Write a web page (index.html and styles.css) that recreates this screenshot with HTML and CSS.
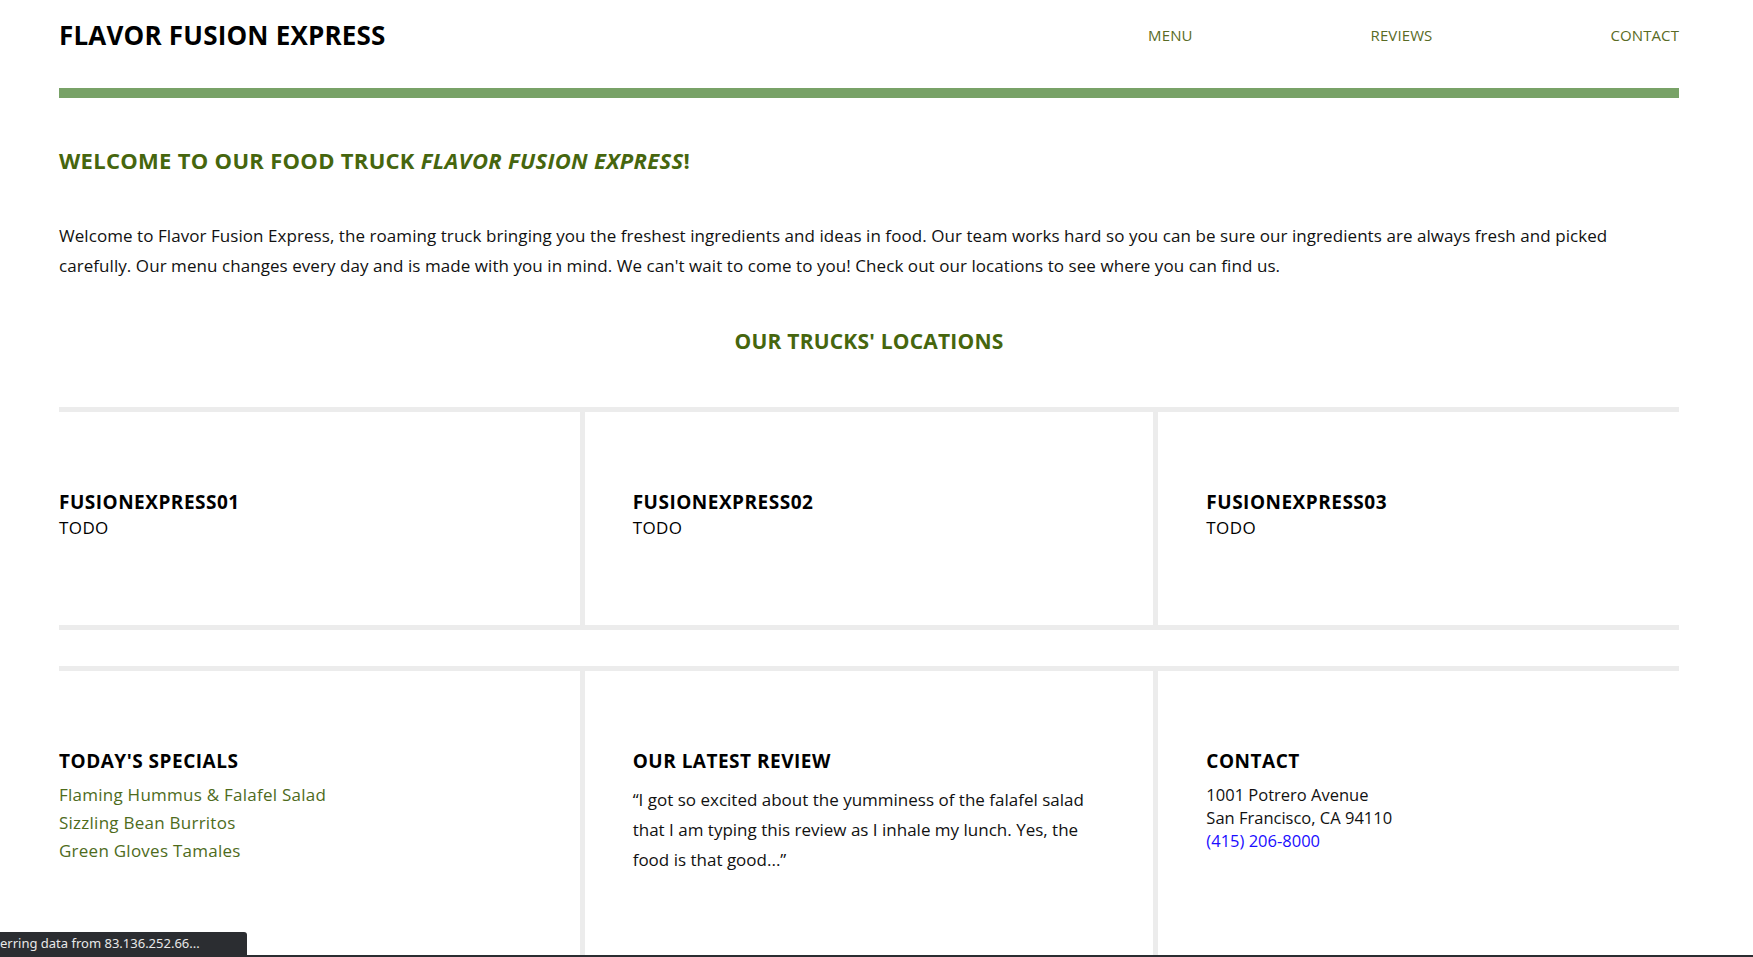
FILE: index.html
```html
<!DOCTYPE html>
<html lang="en">
<head>
<meta charset="utf-8">
<title>Flavor Fusion Express</title>
<link rel="stylesheet" href="styles.css">
</head>
<body>
<div class="page">
  <header class="topbar">
    <div class="logo">FLAVOR FUSION EXPRESS</div>
    <nav class="nav">
      <a href="#menu">MENU</a>
      <a href="#reviews">REVIEWS</a>
      <a href="#contact">CONTACT</a>
    </nav>
  </header>
  <div class="rule"></div>

  <h1 class="welcome">WELCOME TO OUR FOOD TRUCK <em>FLAVOR FUSION EXPRESS</em>!</h1>
  <p class="intro">Welcome to Flavor Fusion Express, the roaming truck bringing you the freshest ingredients and ideas in food. Our team works hard so you can be sure our ingredients are always fresh and picked carefully. Our menu changes every day and is made with you in mind. We can't wait to come to you! Check out our locations to see where you can find us.</p>

  <h2 class="section-title">OUR TRUCKS' LOCATIONS</h2>

  <section class="row row-locations">
    <div class="col col-first">
      <h3 class="col-title">FUSIONEXPRESS01</h3>
      <p class="todo">TODO</p>
    </div>
    <div class="col col-mid">
      <h3 class="col-title">FUSIONEXPRESS02</h3>
      <p class="todo">TODO</p>
    </div>
    <div class="col col-last">
      <h3 class="col-title">FUSIONEXPRESS03</h3>
      <p class="todo">TODO</p>
    </div>
  </section>

  <section class="row row-info">
    <div class="col col-first">
      <h3 class="col-title">TODAY'S SPECIALS</h3>
      <ul class="specials">
        <li>Flaming Hummus &amp; Falafel Salad</li>
        <li>Sizzling Bean Burritos</li>
        <li>Green Gloves Tamales</li>
      </ul>
    </div>
    <div class="col col-mid">
      <h3 class="col-title">OUR LATEST REVIEW</h3>
      <p class="review">“I got so excited about the yumminess of the falafel salad that I am typing this review as I inhale my lunch. Yes, the food is that good...”</p>
    </div>
    <div class="col col-last">
      <h3 class="col-title">CONTACT</h3>
      <address class="contact">
        <span>1001 Potrero Avenue</span>
        <span>San Francisco, CA 94110</span>
        <a href="tel:4152068000">(415) 206-8000</a>
      </address>
    </div>
  </section>
</div>

<div class="status">erring data from 83.136.252.66...</div>
<div class="frame-line"></div>
</body>
</html>
```

FILE: styles.css
```css
html, body {
  margin: 0;
  padding: 0;
  background: #ffffff;
}

body {
  font-family: "Open Sans", "Noto Sans", sans-serif;
  color: #111111;
}

.page {
  width: 1620px;
  margin-left: 59px;
}

.topbar {
  height: 70px;
  display: flex;
  align-items: center;
  justify-content: space-between;
}

.logo {
  font-size: 26px;
  font-weight: 700;
  color: #000000;
  letter-spacing: 0.2px;
}

.nav {
  display: flex;
  gap: 178px;
}

.nav a {
  font-size: 15px;
  color: #596b25;
  text-decoration: none;
  letter-spacing: 0.1px;
}

.rule {
  height: 10px;
  margin-top: 18px;
  background: #78a267;
}

.welcome {
  margin: 50px 0 0;
  font-size: 22px;
  line-height: 24px;
  font-weight: 700;
  color: #46660e;
  letter-spacing: 0.3px;
}

.welcome em {
  font-style: italic;
}

.intro {
  margin: 49px 0 0;
  font-size: 17px;
  line-height: 30px;
  color: #111111;
  letter-spacing: 0.06px;
}

.section-title {
  margin: 48px 0 0;
  text-align: center;
  font-size: 21px;
  line-height: 24px;
  font-weight: 700;
  color: #46660e;
  letter-spacing: 0.2px;
}

.row {
  display: flex;
  border-top: 5px solid #ececec;
}

.row-locations {
  margin-top: 54px;
  border-bottom: 5px solid #ececec;
}

.row-info {
  margin-top: 36px;
  min-height: 300px;
}

.col {
  flex: 1 1 0;
  padding: 78px 48px 83px;
}

.col-first {
  padding-left: 0;
}

.col-last {
  padding-right: 0;
}

.col-mid {
  border-left: 5px solid #ececec;
  border-right: 5px solid #ececec;
}

.col-title {
  margin: 0;
  font-size: 19px;
  line-height: 24px;
  font-weight: 700;
  color: #000000;
  letter-spacing: 0.5px;
}

.todo {
  margin: 0;
  font-size: 17px;
  line-height: 28px;
  color: #000000;
  letter-spacing: 0.4px;
}

.specials {
  list-style: none;
  margin: 8px 0 0;
  padding: 0;
}

.specials li {
  font-size: 17px;
  line-height: 28px;
  color: #4e6b1c;
  letter-spacing: 0.25px;
}

.review {
  margin: 12px 0 0;
  font-size: 17px;
  line-height: 30px;
  color: #111111;
}

.contact {
  margin-top: 10px;
  display: flex;
  flex-direction: column;
  font-style: normal;
  font-size: 16.5px;
  line-height: 23px;
  color: #111111;
}

.contact a {
  color: #1a0dff;
  text-decoration: none;
}

.status {
  position: fixed;
  left: 0;
  bottom: 2px;
  width: 247px;
  height: 23px;
  box-sizing: border-box;
  background: #2b2d31;
  border-top-right-radius: 3px;
  color: #e8e8e8;
  font-family: "Noto Sans", "DejaVu Sans", sans-serif;
  font-size: 13px;
  line-height: 23px;
  white-space: nowrap;
  overflow: hidden;
}

.frame-line {
  position: fixed;
  left: 0;
  right: 0;
  bottom: 0;
  height: 2px;
  background: #2b2d31;
}
```
